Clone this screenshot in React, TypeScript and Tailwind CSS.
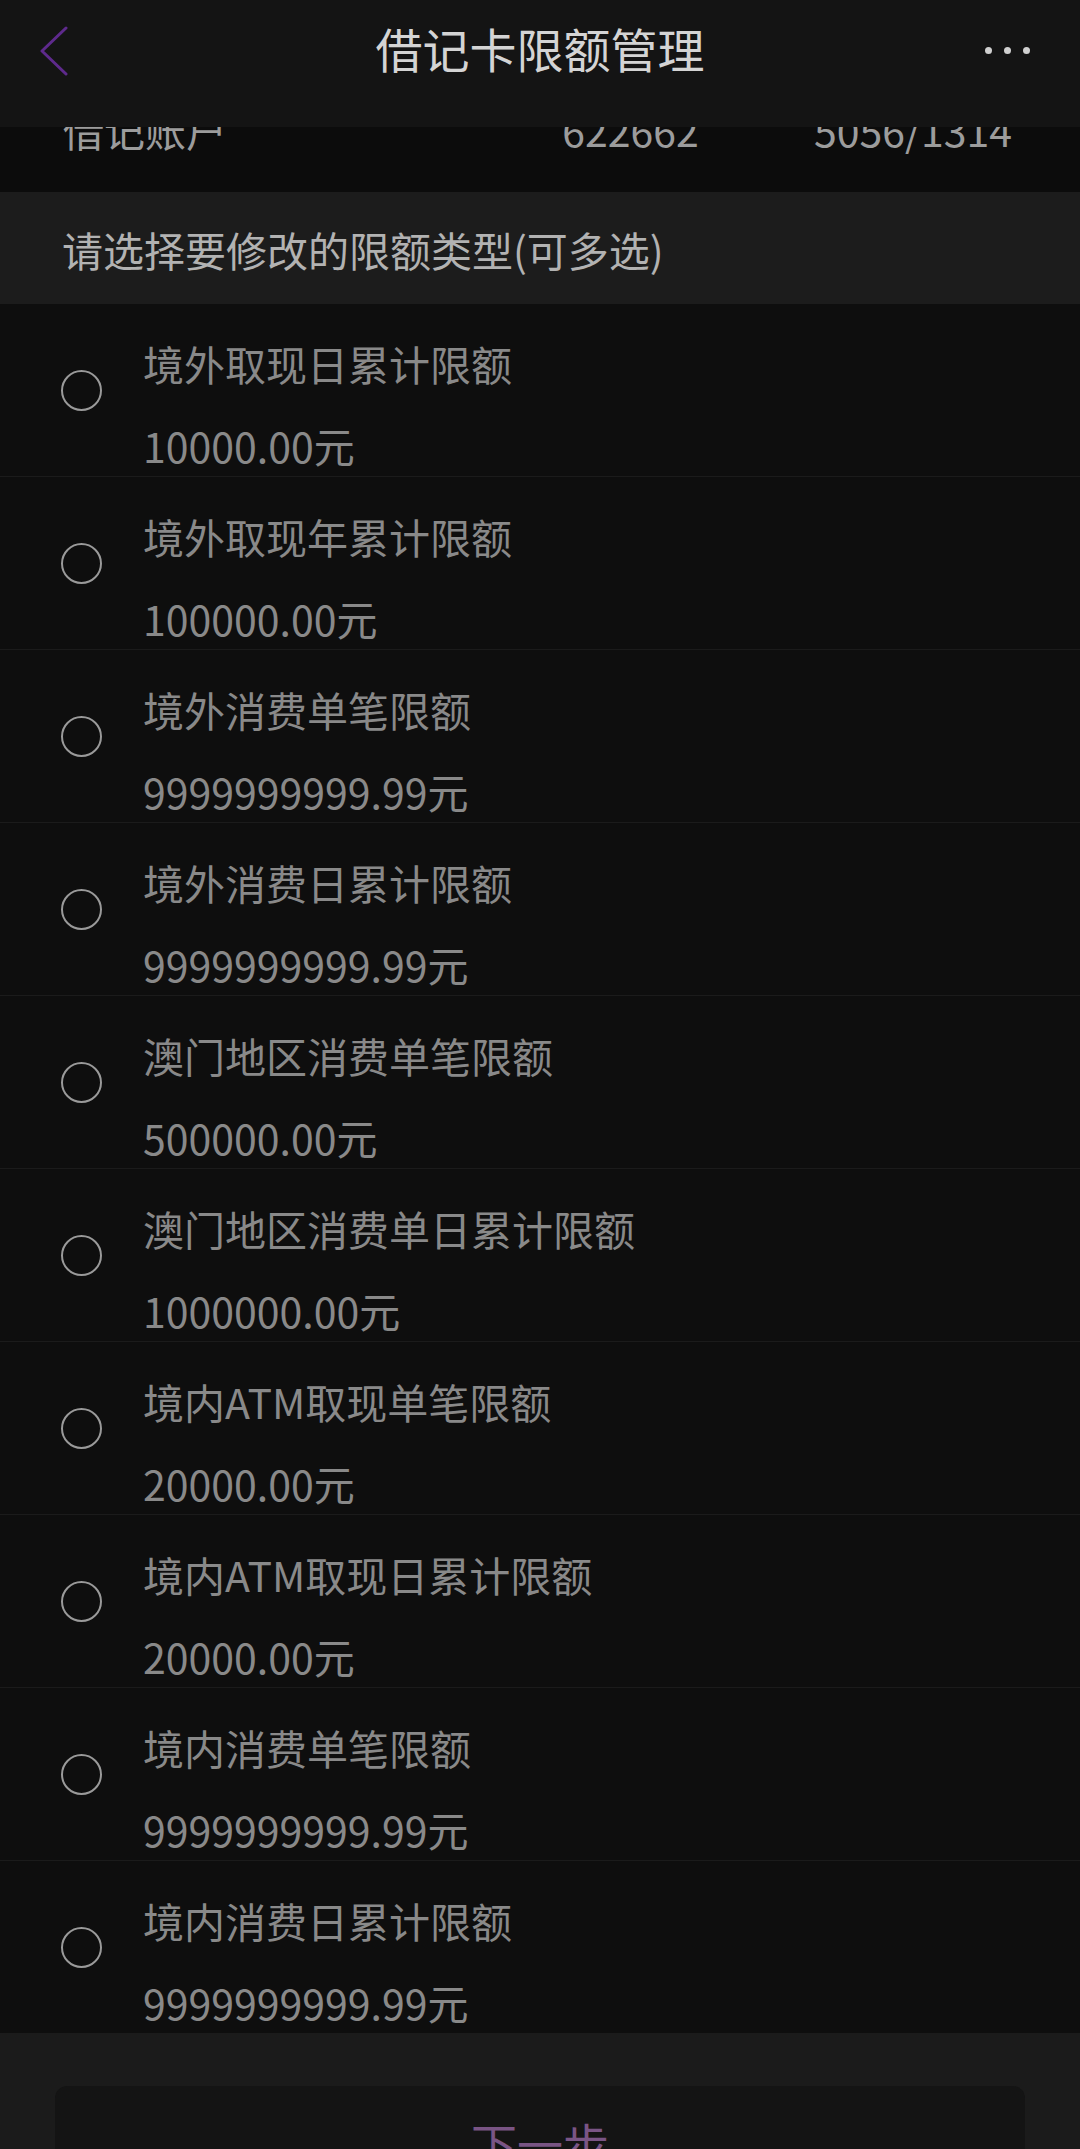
import React from "react";

const items: [string, string][] = [
  ["境外取现日累计限额", "10000.00元"],
  ["境外取现年累计限额", "100000.00元"],
  ["境外消费单笔限额", "9999999999.99元"],
  ["境外消费日累计限额", "9999999999.99元"],
  ["澳门地区消费单笔限额", "500000.00元"],
  ["澳门地区消费单日累计限额", "1000000.00元"],
  ["境内ATM取现单笔限额", "20000.00元"],
  ["境内ATM取现日累计限额", "20000.00元"],
  ["境内消费单笔限额", "9999999999.99元"],
  ["境内消费日累计限额", "9999999999.99元"],
];

const font = { fontFamily: '"Noto Sans CJK SC", "Noto Sans", sans-serif' };

export default function App() {
  return (
    <div className="w-[1080px] h-[2149px] overflow-hidden bg-[#0e0e0e] flex flex-col" style={font}>
      {/* Header */}
      <div className="h-[127px] shrink-0 bg-[#141414] flex items-center relative z-10 -mb-[1px]">
        <div className="w-[160px] h-full flex items-start pl-[38px] pt-[26px]">
          <svg width="32" height="50" viewBox="0 0 32 50" fill="none">
            <path d="M28 2 L4 25 L28 48" stroke="#5e2a8c" strokeWidth="3" strokeLinecap="round" strokeLinejoin="round" />
          </svg>
        </div>
        <div className="flex-1 text-center text-[47px] leading-[60px] text-[#d4d4d4] -mt-[32px]">借记卡限额管理</div>
        <div className="w-[160px] flex justify-end pr-[50px] gap-[12px] -mt-[26px]">
          <span className="w-[7px] h-[7px] rounded-full bg-[#d0d0d0]" />
          <span className="w-[7px] h-[7px] rounded-full bg-[#d0d0d0]" />
          <span className="w-[7px] h-[7px] rounded-full bg-[#d0d0d0]" />
        </div>
      </div>

      {/* Card info row (partly scrolled under header) */}
      <div className="h-[66px] shrink-0 bg-[#0c0c0c] overflow-hidden">
        <div className="flex items-center pl-[63px] pr-[68px] h-[41px] -mt-[17px] text-[41px] leading-[41px] text-[#9c9c9c]">
          <span className="flex-1">借记账户</span>
          <span>622662</span>
          <span className="ml-[115px]">5056/1314</span>
        </div>
      </div>

      {/* Section title */}
      <div className="h-[112px] shrink-0 bg-[#1c1c1c] pl-[62px] pt-[29px] text-[41px] leading-[56px] text-[#b2b2b2]">
        请选择要修改的限额类型(可多选)
      </div>

      {/* List */}
      <div className="flex flex-col">
        {items.map(([t, v], i) => (
          <div key={i} className="h-[173px] shrink-0 flex border-b border-[#1b1b1b] bg-[#0e0e0e]">
            <div className="w-[143px] shrink-0 pl-[61px] flex items-center">
              <span className="w-[41px] h-[41px] rounded-full border-2 border-[#9a9a9a]" />
            </div>
            <div className="flex flex-col pt-[31px] gap-[26px] text-[41px] leading-[56px] text-[#898989]">
              <span>{t}</span>
              <span>{v}</span>
            </div>
          </div>
        ))}
      </div>

      {/* Footer */}
      <div className="flex-1 bg-[#1b1b1b] px-[55px] pt-[52px]">
        <div className="h-[140px] rounded-[12px] bg-[#141414] flex justify-center pt-[26px] text-[46px] leading-[60px] text-[#7a5585]">
          下一步
        </div>
      </div>
    </div>
  );
}
